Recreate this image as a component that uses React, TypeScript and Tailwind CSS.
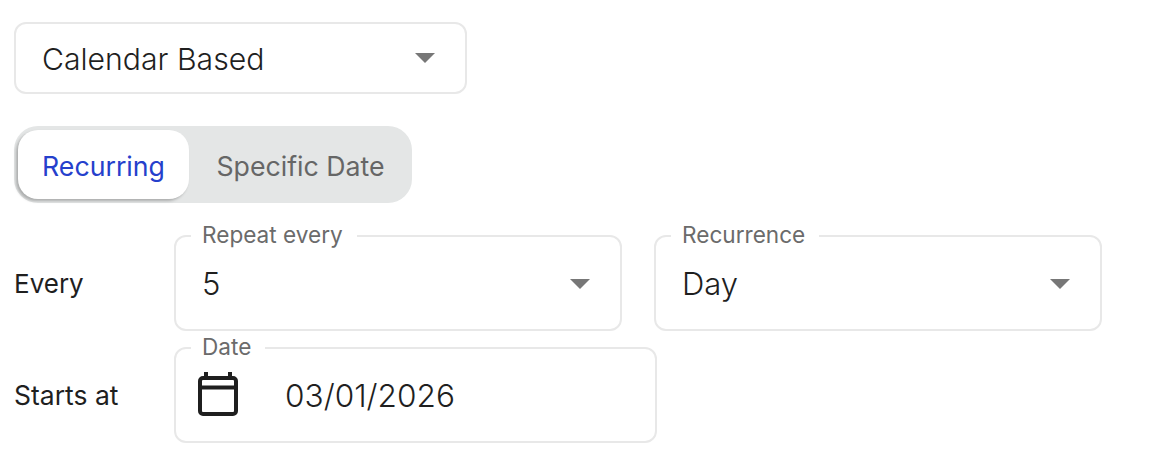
const font = "font-['Inter',sans-serif]";

function Caret() {
  return (
    <svg width="20" height="10" viewBox="0 0 20 10" className="shrink-0">
      <path d="M0 0h20L10 10z" fill="#777777" />
    </svg>
  );
}

function CalendarIcon() {
  return (
    <svg width="40" height="48" viewBox="0 0 40 48" fill="none" stroke="#1f1f1f" strokeWidth="4" className="shrink-0">
      <rect x="2" y="6" width="36" height="36" rx="3" />
      <path d="M2 15.5h36" />
      <path d="M8 0v6M32 0v6" />
    </svg>
  );
}

function OutlinedField({ label, className, children }: { label: string; className: string; children: React.ReactNode }) {
  return (
    <fieldset className={`rounded-xl border-2 border-[#e8e8e8] ${className}`}>
      <legend className="ml-[15px] pb-[2px] pl-[11px] pr-[14px] text-[22.6px] leading-[24px] text-[#6b6b6b]">{label}</legend>
      {children}
    </fieldset>
  );
}

export default function App() {
  return (
    <div className={`${font} h-[460px] w-[1172px] bg-white pl-[14px] pt-[22px] text-[#1f1f1f]`}>
      <div className="flex h-[72px] w-[453px] items-center justify-between rounded-xl border-2 border-[#e8e8e8] pl-[26px] pr-[30px] text-[30.2px] font-light">
        <span className="pt-[3px]">Calendar Based</span>
        <Caret />
      </div>

      <div className="mt-[32px] flex h-[77px] w-[398px] items-center rounded-[24px] bg-[#e4e6e6] p-[4px] text-[26.7px]">
        <div className="flex h-[69px] w-[171px] items-center justify-center rounded-[20px] bg-white pt-[4px] text-[#2540cc] shadow-[-2px_2px_3px_rgba(0,0,0,0.25)]">
          Recurring
        </div>
        <div className="flex flex-1 items-center justify-center pl-[4px] pt-[4px] text-[#666666]">Specific Date</div>
      </div>

      <div className="mt-[20px] flex items-end">
        <div className="flex h-[96px] w-[160px] items-center text-[26px]">Every</div>
        <OutlinedField label="Repeat every" className="h-[108px] w-[448px]">
          <div className="flex h-[70px] items-center justify-between pl-[26px] pr-[30px] text-[31px] font-light">
            <span>5</span>
            <Caret />
          </div>
        </OutlinedField>
        <OutlinedField label="Recurrence" className="ml-[32px] h-[108px] w-[448px]">
          <div className="flex h-[70px] items-center justify-between pl-[26px] pr-[30px] text-[31px] font-light">
            <span>Day</span>
            <Caret />
          </div>
        </OutlinedField>
      </div>

      <div className="mt-[4px] flex items-end">
        <div className="flex h-[94px] w-[160px] items-center text-[26.5px]">Starts at</div>
        <OutlinedField label="Date" className="h-[108px] w-[483px]">
          <div className="flex h-[70px] items-center gap-[47px] pl-[22px] text-[31.6px] font-light">
            <CalendarIcon />
            <span>03/01/2026</span>
          </div>
        </OutlinedField>
      </div>
    </div>
  );
}
